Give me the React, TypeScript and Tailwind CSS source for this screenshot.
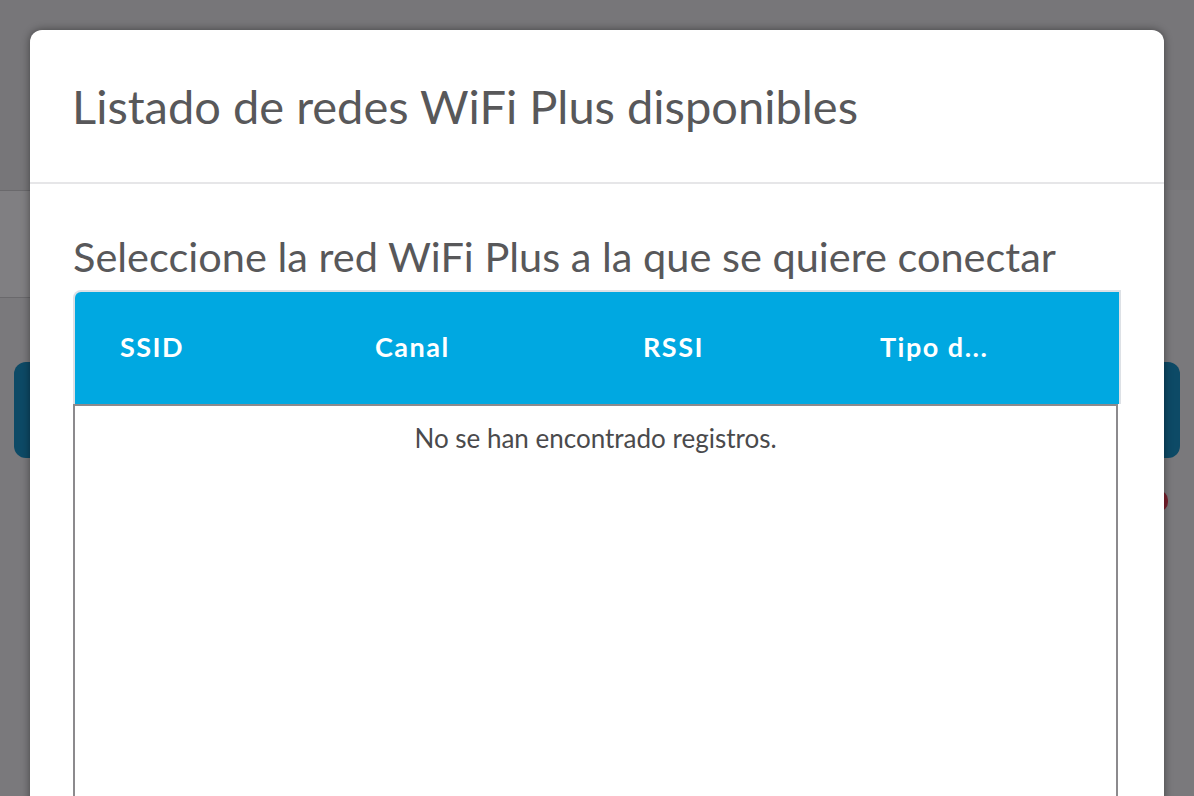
import React from 'react';

// Columns of the (empty) networks table
const columns = [
  { label: 'SSID', width: 'w-[255px]' },
  { label: 'Canal', width: 'w-[268px]' },
  { label: 'RSSI', width: 'w-[237px]' },
  { label: 'Tipo d...', width: 'flex-1' },
];

export default function App() {
  return (
    <div
      className="relative h-[796px] w-full overflow-hidden bg-[#7a797c]"
      style={{ fontFamily: 'Lato, "Open Sans", sans-serif' }}
    >
      {/* Page behind the overlay */}
      <div className="flex h-full flex-col">
        <div className="h-[190px] bg-[#777679]" />
        <div className="h-[108px] w-[32px] border-y border-r border-[#6a696c] bg-[#807f82]" />
        <div className="mt-[64px] flex justify-between px-[14px]">
          <div className="h-[96px] w-[40px] rounded-[12px] bg-[#0d4a66]" />
          <div className="h-[96px] w-[40px] rounded-[12px] bg-[#0d4a66]" />
        </div>
        <div className="mt-[32px] flex justify-end pr-[26px]">
          <div className="h-[22px] w-[20px] rounded-full bg-[#7a1e2c]" />
        </div>
      </div>

      {/* Modal */}
      <div className="absolute left-[30px] top-[30px] h-[800px] w-[1134px] rounded-[12px] bg-white shadow-[0_0_8px_rgba(0,0,0,0.45)]">
        <div className="flex h-[154px] items-center border-b-2 border-[#e6e6e8] px-[42px]">
          <h1 className="text-[47px] leading-none text-[#58585a]">
            Listado de redes WiFi Plus disponibles
          </h1>
        </div>

        <div className="px-[43px] pt-[52px]">
          <p className="text-[41.5px] leading-none text-[#58585a]">
            Seleccione la red WiFi Plus a la que se quiere conectar
          </p>

          <div className="mt-[12px]">
            <div className="flex h-[114px] items-center rounded-tl-[8px] border-2 border-b-0 border-[#dde1e6] bg-[#00a8e1]">
              {columns.map((col) => (
                <div
                  key={col.label}
                  className={`${col.width} pl-[45px] text-[27px] font-bold tracking-[1.5px] text-white`}
                >
                  {col.label}
                </div>
              ))}
            </div>
            <div className="mr-[3px] h-[420px] border-x-2 border-t-2 border-[#8c8a8d] pt-[13px] text-center text-[26px] text-[#4a4a4c]">
              No se han encontrado registros.
            </div>
          </div>
        </div>
      </div>
    </div>
  );
}
